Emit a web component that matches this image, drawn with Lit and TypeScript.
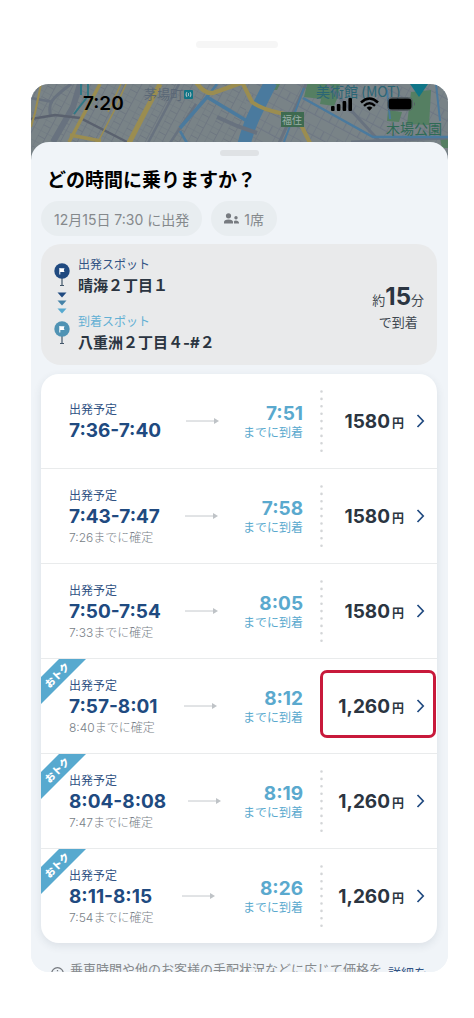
import { LitElement, html, svg, css, nothing } from "lit";
import { customElement, property, state } from "lit/decorators.js";
import { classMap } from "lit/directives/class-map.js";

interface Trip {
  departure: string;
  arrival: string;
  confirm?: string;
  price: string;
  deal?: boolean;
}

const TRIPS: Trip[] = [
  { departure: "7:36-7:40", arrival: "7:51", price: "1580" },
  { departure: "7:43-7:47", arrival: "7:58", confirm: "7:26", price: "1580" },
  { departure: "7:50-7:54", arrival: "8:05", confirm: "7:33", price: "1580" },
  { departure: "7:57-8:01", arrival: "8:12", confirm: "8:40", price: "1,260", deal: true },
  { departure: "8:04-8:08", arrival: "8:19", confirm: "7:47", price: "1,260", deal: true },
  { departure: "8:11-8:15", arrival: "8:26", confirm: "7:54", price: "1,260", deal: true },
];

@customElement("city-map")
class CityMap extends LitElement {
  static styles = css`
    :host { display: block; }
    .map { display: block; width: 100%; height: 100%; }
    text { font-family: "Noto Sans CJK JP", sans-serif; }
  `;

  render() {
    return html`<svg class="map" viewBox="0 0 417 80" preserveAspectRatio="xMidYMin slice" aria-hidden="true">
      <defs>
        <pattern id="west" width="15" height="12" patternUnits="userSpaceOnUse" patternTransform="rotate(28)">
          <path d="M0 0H15M0 0V12M8 0V12M0 6H8" fill="none" stroke="#6e7781" stroke-width="1" />
        </pattern>
        <pattern id="east" width="19" height="16" patternUnits="userSpaceOnUse" patternTransform="rotate(-62)">
          <path d="M0 0H19M0 0V16M11 0V16M11 9H19" fill="none" stroke="#6e7783" stroke-width="1.2" />
        </pattern>
      </defs>
      <rect width="417" height="80" fill="#798387" />
      <rect width="215" height="80" fill="url(#west)" />
      <rect x="215" width="202" height="80" fill="url(#east)" />
      <g fill="#557f62">
        <path d="M276 0H309L306 15L303 22L289 20L290 15L273 13Z" />
        <path d="M380 8L400 6L398 41L376 40Z" />
        <path d="M357 26L371 28L368 38L356 37Z" />
        <path d="M240 0H249L246 6H239Z" />
        <path d="M409 54H417V64H411Z" />
      </g>
      <g fill="none" stroke="#68727f">
        <path d="M49 0L42 23L22 58" stroke-width="6" />
        <path d="M40 0Q25 11 21 17T20 33" stroke-width="3" />
        <path d="M0 35L24 31L49 34L98 59" stroke="#5a616e" stroke-width="2.4" />
        <path d="M117 59L148 0M139 59L165 20M0 14L22 18" stroke-width="2.5" />
        <path d="M248 59L275 0M296 0L350 59M320 58L417 54" stroke-width="3" />
      </g>
      <g fill="none" stroke="#4a7a9e">
        <path d="M240 -2Q227 23 222 34T213 60" stroke-width="13" />
        <path d="M149 44L176 13L216 37" stroke-width="3.5" />
        <path d="M149 47L156 59M176 13L186 0" stroke-width="2.5" />
        <path d="M272 14L342 53H417" stroke-width="2.5" />
        <path d="M405 0L409 37M273 4L253 58M356 6L359 35" stroke-width="2" />
      </g>
      <path d="M186 33L206 42L226 49" fill="none" stroke="#68727f" stroke-width="4" />
      <g fill="none" stroke="#9b8d50" stroke-linejoin="round">
        <path d="M129 0L113 30L98 59" stroke-width="5" />
        <path d="M69 0L54 28L38 58" stroke-width="3.5" />
        <path d="M95 0L83 27L67 58M90 0L77 28" stroke-width="1.5" />
        <path d="M10 0L4 29L0 43" stroke-width="2" />
        <path d="M39 51L70 57" stroke-width="3.5" />
        <path d="M165 -2Q173 10 182 9L213 -2" stroke-width="4.5" />
        <path d="M212 0L221 18Q230 25 249 29T269 39L279 59" stroke-width="4" />
      </g>
      <path d="M57 0L57 12L43 30M50 0V11" fill="none" stroke="#307785" stroke-width="2" />
      <text x="113" y="15" font-size="13" fill="#5b6876">茅場町</text>
      <rect x="153" y="6" width="9" height="9" rx="1" fill="#0f7485" />
      <path d="M156 8Q154 10.500 156 13M159 8Q161 10.500 159 13M157.500 9V12" stroke="#a0b7bd" fill="none" />
      <rect x="250" y="28" width="23" height="15" fill="#3e6a50" />
      <text x="251" y="40" font-size="10" fill="#9bb0aa">福住</text>
      <text x="285" y="13" font-size="14" fill="#2b6675">美術館 (MOT)</text>
      <text x="355" y="50" font-size="14" fill="#2f6a55">木場公園</text>
      <path d="M379 0H397L388 13Z" fill="#107587" />
    </svg>`;
  }
}

@customElement("status-bar")
class StatusBar extends LitElement {
  static styles = css`
    :host {
      display: flex;
      align-items: flex-start;
      justify-content: space-between;
      padding: 8px 32px 0 52px;
      font: 600 19px/24px Inter, sans-serif;
      color: #000;
    }
    .signals { display: flex; align-items: center; gap: 8px; height: 24px; }
    svg { display: block; }
  `;

  render() {
    return html`
      <span>7:20</span>
      <span class="signals">
        <svg width="21" height="14" viewBox="0 0 21 14" aria-hidden="true">
          <rect y="9" width="3.600" height="5" rx="1" /><rect x="5.800" y="7" width="3.600" height="7" rx="1" />
          <rect x="11.600" y="4" width="3.600" height="10" rx="1" /><rect x="17.400" y="1" width="3.600" height="13" rx="1" />
        </svg>
        <svg width="19" height="14" viewBox="0 0 19 14" fill="none" stroke="#000" stroke-width="2.500" aria-hidden="true">
          <path d="M1 5.500Q9.500 -2.500 18 5.500M4 8.800Q9.500 3.800 15 8.800" />
          <path d="M6.600 10.700Q9.500 8.300 12.400 10.700L9.500 13.800Z" fill="#000" stroke="none" />
        </svg>
        <svg width="29" height="14" viewBox="0 0 29 14" aria-hidden="true">
          <rect x=".5" y=".5" width="25" height="13" rx="4" fill="none" stroke="#555e64" />
          <rect x="1.500" y="1.500" width="23" height="11" rx="3" /><path d="M27 5Q29 7 27 9Z" fill="#555e64" />
        </svg>
      </span>
    `;
  }
}

const pin = (y: number, color: string) => svg`
  <g transform="translate(0 ${y})">
    <path d="M8 15V22M6 22.500H10" stroke="#43576a" stroke-width="1.200" fill="none" />
    <circle cx="8" cy="8" r="7.700" fill=${color} />
    <path d="M5.800 5V11.500" stroke="#fff" stroke-width="1" />
    <path d="M6 5.300H10.500L9.800 7.200L10.500 9H6Z" fill="#fff" />
  </g>`;

@customElement("route-summary")
class RouteSummary extends LitElement {
  static styles = css`
    :host {
      display: flex;
      align-items: center;
      padding: 12px 13px 11px;
      border-radius: 20px;
      background: #e9eaeb;
      color: #2b3541;
    }
    .track { flex: none; margin-right: 8px; }
    .spots { flex: 1; display: grid; gap: 16px; margin: 0; }
    .label { font-size: 12px; line-height: 18px; color: #315384; }
    .label.to { color: #63b0d4; }
    .name { margin: 0; font-size: 15px; line-height: 23px; font-weight: 700; }
    .eta { padding-top: 6px; text-align: center; font-size: 13px; line-height: 20px; color: #404850; }
    .minutes { display: block; line-height: 24px; }
    .minutes strong { font-size: 24px; color: #2b3541; }
  `;

  render() {
    return html`
      <svg class="track" width="16" height="84" viewBox="0 0 16 84" aria-hidden="true">
        ${pin(0, "#204a80")}
        <path d="M3.500 29.500H12.500L8 34.500Z" fill="#204a80" />
        <path d="M3.500 37.500H12.500L8 42.500Z" fill="#4482a8" />
        <path d="M3.500 45.500H12.500L8 50.500Z" fill="#57aad0" />
        ${pin(58, "#5093b4")}
      </svg>
      <dl class="spots">
        <div><dt class="label">出発スポット</dt><dd class="name">晴海２丁目１</dd></div>
        <div><dt class="label to">到着スポット</dt><dd class="name">八重洲２丁目４-#２</dd></div>
      </dl>
      <div class="eta"><span class="minutes">約<strong>15</strong>分</span>で到着</div>
    `;
  }
}

@customElement("trip-row")
class TripRow extends LitElement {
  @property({ attribute: false }) trip!: Trip;
  @property({ type: Boolean }) selected = false;

  static styles = css`
    :host {
      position: relative;
      display: flex;
      align-items: center;
      height: 94px;
      padding-left: 28px;
    }
    .label { font-size: 12px; line-height: 18px; color: #315384; }
    .time { font-size: 19px; line-height: 24px; font-weight: 700; color: #204a80; }
    .confirm { font-size: 12px; line-height: 18px; font-weight: 300; color: #777e86; }
    .departure { padding-top: 2px; }
    .arrow { flex: 1; display: flex; justify-content: center; }
    .arrival { text-align: right; color: #5aa9ce; padding: 4px 17px 0 0; }
    .arrival .time, .arrival .label { color: inherit; }
    .arrival .time { line-height: 20px; }
    .buy {
      display: flex;
      align-items: center;
      justify-content: flex-end;
      box-sizing: border-box;
      width: 116px;
      height: 68px;
      margin: 0 1px 0 0;
      padding: 0 11px 0 0;
      border: 0;
      background: none;
      color: #2b3541;
      font: inherit;
      cursor: pointer;
    }
    .buy.selected {
      margin-bottom: 4px;
      padding: 4px 8px 0 0;
      border: 3px solid #c8193b;
      border-radius: 7px;
    }
    .dots { flex: none; margin-right: auto; }
    .amount { font-size: 19px; font-weight: 700; white-space: nowrap; }
    .yen { font-size: 12px; margin-left: 2px; }
    .chevron { flex: none; margin-left: 12px; }
    .ribbon { position: absolute; left: 0; top: 0; }
    .ribbon text { font-family: "Noto Sans CJK JP", sans-serif; font-size: 10px; font-weight: 900; fill: #fff; }
  `;

  render() {
    const t = this.trip;
    return html`
      ${t.deal
        ? html`<svg class="ribbon" width="45" height="45" viewBox="0 0 45 45">
            <path d="M18 0H45L0 45V18Z" fill="#57a9cf" />
            <text x="16" y="20" text-anchor="middle" transform="rotate(-45 16 16)">おトク</text>
          </svg>`
        : nothing}
      <div class="departure">
        <div class="label">出発予定</div>
        <div class="time">${t.departure}</div>
        ${t.confirm ? html`<div class="confirm">${t.confirm}までに確定</div>` : nothing}
      </div>
      <div class="arrow">
        <svg width="33" height="6" viewBox="0 0 33 6" aria-hidden="true">
          <path d="M0 3H29" stroke="#c4c8cc" /><path d="M28 0L33 3L28 6Z" fill="#bfc3c7" />
        </svg>
      </div>
      <div class="arrival">
        <div class="time">${t.arrival}</div>
        <div class="label">までに到着</div>
      </div>
      <button class=${classMap({ buy: true, selected: this.selected })}
        @click=${() => this.dispatchEvent(new CustomEvent("pick"))}>
        ${this.selected
          ? nothing
          : html`<svg class="dots" width="3" height="63" viewBox="0 0 3 63" aria-hidden="true">
              <path d="M1.500 1.500V62" stroke="#d3d5d7" stroke-width="2.600" stroke-linecap="round" stroke-dasharray="0 7.400" />
            </svg>`}
        <span class="amount">${t.price}<span class="yen">円</span></span>
        <svg class="chevron" width="9" height="14" viewBox="0 0 9 14" aria-hidden="true">
          <path d="M1.500 1L7.200 7L1.500 13" fill="none" stroke="#204a80" stroke-width="1.700" />
        </svg>
      </button>
    `;
  }
}

@customElement("app-root")
class AppRoot extends LitElement {
  @state() private picked = 3;

  static styles = css`
    :host {
      display: flex;
      flex-direction: column;
      box-sizing: border-box;
      height: 100vh;
      padding: 41px 0 46px;
      background: #fff;
      font-family: Inter, "Noto Sans CJK JP", sans-serif;
    }
    .grip { align-self: center; width: 82px; height: 7px; border-radius: 4px; background: #f6f6f6; }
    .phone {
      flex: 1;
      min-height: 0;
      display: grid;
      grid-template-rows: 58px 1fr;
      margin: 36px 26px 0 31px;
      border-radius: 18px;
      overflow: hidden;
      background: #f0f4f8;
    }
    .map { grid-area: 1 / 1; height: 80px; }
    .status { grid-area: 1 / 1; z-index: 1; }
    .sheet {
      z-index: 1;
      padding: 8px 11px 0 10px;
      border-radius: 18px 18px 0 0;
      background: #f0f4f8;
    }
    .handle { width: 39px; height: 6px; margin: 0 auto; border-radius: 3px; background: #dfe2e5; }
    h1 { margin: 10px 6px 0; font-size: 19px; line-height: 30px; font-weight: 700; color: #000; }
    .chips { display: flex; gap: 9px; margin: 5px 0 8px; }
    .chip {
      display: flex;
      align-items: center;
      gap: 5px;
      height: 35px;
      padding: 0 13px;
      border: 0;
      border-radius: 18px;
      background: #e8edf0;
      color: #85898c;
      font: inherit;
      font-size: 14px;
    }
    .trips {
      margin: 9px 0 0;
      padding: 0;
      list-style: none;
      border-radius: 18px;
      overflow: hidden;
      background: #fff;
      box-shadow: 0 3px 8px rgba(40, 60, 80, 0.1);
    }
    .trips li + li { border-top: 1px solid #e9ebec; }
    .note {
      display: flex;
      gap: 6px;
      margin: 16px 0 0;
      padding: 0 10px;
      font-size: 13px;
      line-height: 20px;
      color: #85898c;
      white-space: nowrap;
    }
    .note svg { flex: none; margin-top: 8px; }
    .note a { color: #315384; text-decoration: none; line-height: 28px; }
  `;

  render() {
    return html`
      <div class="grip"></div>
      <main class="phone">
        <city-map class="map"></city-map>
        <status-bar class="status"></status-bar>
        <section class="sheet">
          <div class="handle"></div>
          <h1>どの時間に乗りますか？</h1>
          <div class="chips">
            <button class="chip">12月15日 7:30 に出発</button>
            <button class="chip">
              <svg width="15" height="11" viewBox="0 0 15 11" fill="#777b80" aria-hidden="true">
                <circle cx="4.500" cy="2.800" r="2.600" /><path d="M0 10.500V9Q0 6.400 4.500 6.400T9 9V10.500Z" />
                <circle cx="12" cy="4.700" r="1.700" /><path d="M10 10.500V8.500Q10 7.400 12 7.400T15 9.200V10.500Z" />
              </svg>
              1席
            </button>
          </div>
          <route-summary></route-summary>
          <ul class="trips">
            ${TRIPS.map((trip, i) => html`<li>
              <trip-row .trip=${trip} ?selected=${i === this.picked} @pick=${() => (this.picked = i)}></trip-row>
            </li>`)}
          </ul>
          <p class="note">
            <svg width="13" height="13" viewBox="0 0 13 13" aria-hidden="true">
              <circle cx="6.500" cy="6.500" r="5.800" fill="none" stroke="#777b80" stroke-width="1.300" />
              <path d="M6.500 5.500V9.500M6.500 3V4.300" stroke="#777b80" stroke-width="1.300" />
            </svg>
            <span>乗車時間や他のお客様の手配状況などに応じて価格を</span>
            <a href="#details">詳細を</a>
          </p>
        </section>
      </main>
    `;
  }
}
